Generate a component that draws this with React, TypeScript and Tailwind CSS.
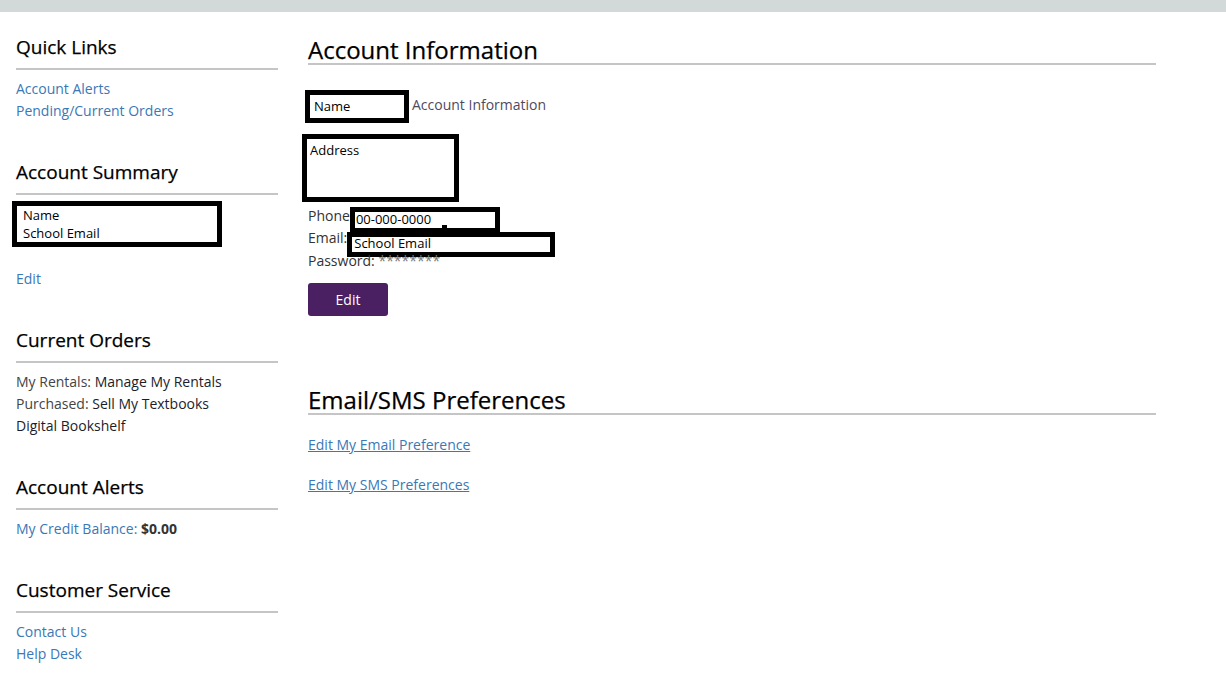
import React from "react";

function SideHeading({ children }: { children: React.ReactNode }) {
  return (
    <h2 className="text-[19px] leading-[24px] font-normal text-black [-webkit-text-stroke:0.25px_#000] pb-[9px] border-b-2 border-[#c6c5c6]">
      {children}
    </h2>
  );
}

function MainHeading({ children }: { children: React.ReactNode }) {
  return (
    <h1 className="text-[24px] leading-[27px] font-normal text-black [-webkit-text-stroke:0.25px_#000] border-b-2 border-[#c6c5c6]">
      {children}
    </h1>
  );
}

export default function App() {
  return (
    <div className="min-h-[686px] bg-white font-['Open_Sans',sans-serif] text-[14px] leading-[22px] text-[#444]">
      <div className="h-[12px] bg-[#d3d9d8]" />
      <div className="flex pl-[16px] gap-[30px]">
        {/* Left column */}
        <aside className="w-[262px] pt-[23px] shrink-0">
          <section className="mb-[38px]">
            <SideHeading>Quick Links</SideHeading>
            <div className="mt-[8px] flex flex-col text-[#3a78b6]">
              <a>Account Alerts</a>
              <a>Pending/Current Orders</a>
            </div>
          </section>

          <section className="mb-[38px]">
            <SideHeading>Account Summary</SideHeading>
            <div className="mt-[6px] ml-[-4px] w-[210px] h-[46px] border-[5px] border-black pl-[6px] text-[13px] leading-[18px] text-black">
              <div>Name</div>
              <div>School Email</div>
            </div>
            <div className="mt-[21px] text-[#3a78b6]">Edit</div>
          </section>

          <section className="mb-[38px]">
            <SideHeading>Current Orders</SideHeading>
            <div className="mt-[8px] flex flex-col">
              <div>
                My Rentals: <span className="text-[#1c1c2a]">Manage My Rentals</span>
              </div>
              <div>
                Purchased: <span className="text-[#1c1c2a]">Sell My Textbooks</span>
              </div>
              <div className="text-[#1c1c2a]">Digital Bookshelf</div>
            </div>
          </section>

          <section className="mb-[38px]">
            <SideHeading>Account Alerts</SideHeading>
            <div className="mt-[8px]">
              <span className="text-[#3a78b6]">My Credit Balance:</span>{" "}
              <span className="font-bold text-[#333]">$0.00</span>
            </div>
          </section>

          <section>
            <SideHeading>Customer Service</SideHeading>
            <div className="mt-[8px] flex flex-col text-[#3a78b6]">
              <a>Contact Us</a>
              <a>Help Desk</a>
            </div>
          </section>
        </aside>

        {/* Main column */}
        <main className="w-[848px] pt-[24px] shrink-0">
          <MainHeading>Account Information</MainHeading>

          <div className="mt-[25px] flex items-start">
            <div className="ml-[-3px] w-[104px] h-[33px] border-[5px] border-black pl-[4px] text-[13px] leading-[23px] text-black">
              Name
            </div>
            <span className="ml-[3px] mt-[4px] text-[#4f4a5e]">Account Information</span>
          </div>

          <div className="mt-[11px] ml-[-6px] w-[157px] h-[68px] border-[5px] border-black pl-[3px] text-[13px] leading-[22px] text-black">
            Address
          </div>

          <div className="mt-[3px] text-[#333]">
            <div className="flex items-start h-[22px]">
              <span>Phone</span>
              <div className="relative mt-[2px] w-[150px] h-[25px] border-[5px] border-b-[4px] border-black bg-white pl-[1px] text-[13px] leading-[15px] text-black">
                00-000-0000
                <span className="absolute left-[87px] bottom-0 w-[5px] h-[3px] bg-black" />
              </div>
            </div>
            <div className="flex items-start h-[22px]">
              <span>Email:</span>
              <div className="mt-[5px] w-[208px] h-[25px] border-[5px] border-black bg-white pl-[2px] text-[13px] leading-[12px] text-black">
                School Email
              </div>
            </div>
            <div className="h-[22px] mt-[1px]">
              Password: <span className="text-[#777]">********</span>
            </div>
          </div>

          <button className="mt-[11px] w-[80px] h-[33px] rounded-[3px] bg-[#4b2063] text-white text-[14px] leading-[22px]">
            Edit
          </button>

          <div className="mt-[70px]">
            <MainHeading>Email/SMS Preferences</MainHeading>
          </div>
          <div className="mt-[19px] flex flex-col items-start text-[#3a78b6]">
            <a className="underline">Edit My Email Preference</a>
            <a className="underline mt-[18px]">Edit My SMS Preferences</a>
          </div>
        </main>
      </div>
    </div>
  );
}
